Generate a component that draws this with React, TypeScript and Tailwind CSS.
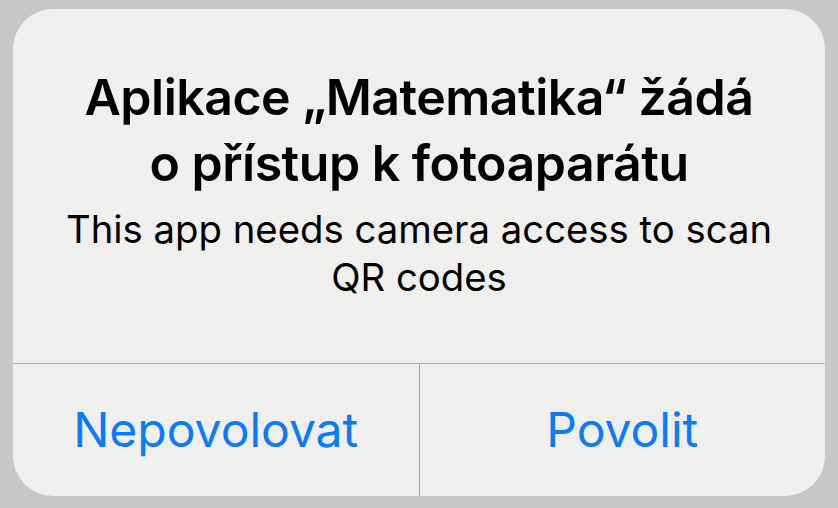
export default function App() {
  return (
    <div className="w-[838px] h-[508px] bg-[#c7c7c7] pt-[9px] pl-[13px]" style={{ fontFamily: "Inter, 'Noto Sans', sans-serif" }}>
      <div className="w-[812px] h-[487px] bg-[#efefed] rounded-[40px] flex flex-col overflow-hidden">
        <div className="flex-1 flex flex-col items-center pt-[55px] px-[30px]">
          <div className="text-[50px] leading-[66px] font-semibold text-black text-center tracking-[-0.5px] whitespace-nowrap">
            Aplikace „Matematika“ žádá<br />o přístup k fotoaparátu
          </div>
          <div className="text-[38.3px] leading-[48px] text-black text-center mt-[9px] whitespace-nowrap">
            This app needs camera access to scan<br />QR codes
          </div>
        </div>
        <div className="h-[133px] border-t border-[#a9a9a9] flex">
          <div className="flex-1 flex items-center justify-center text-[48px] text-[#0a7aff] border-r border-[#a9a9a9]">
            Nepovolovat
          </div>
          <div className="flex-1 flex items-center justify-center text-[48px] text-[#0a7aff]">
            Povolit
          </div>
        </div>
      </div>
    </div>
  );
}
